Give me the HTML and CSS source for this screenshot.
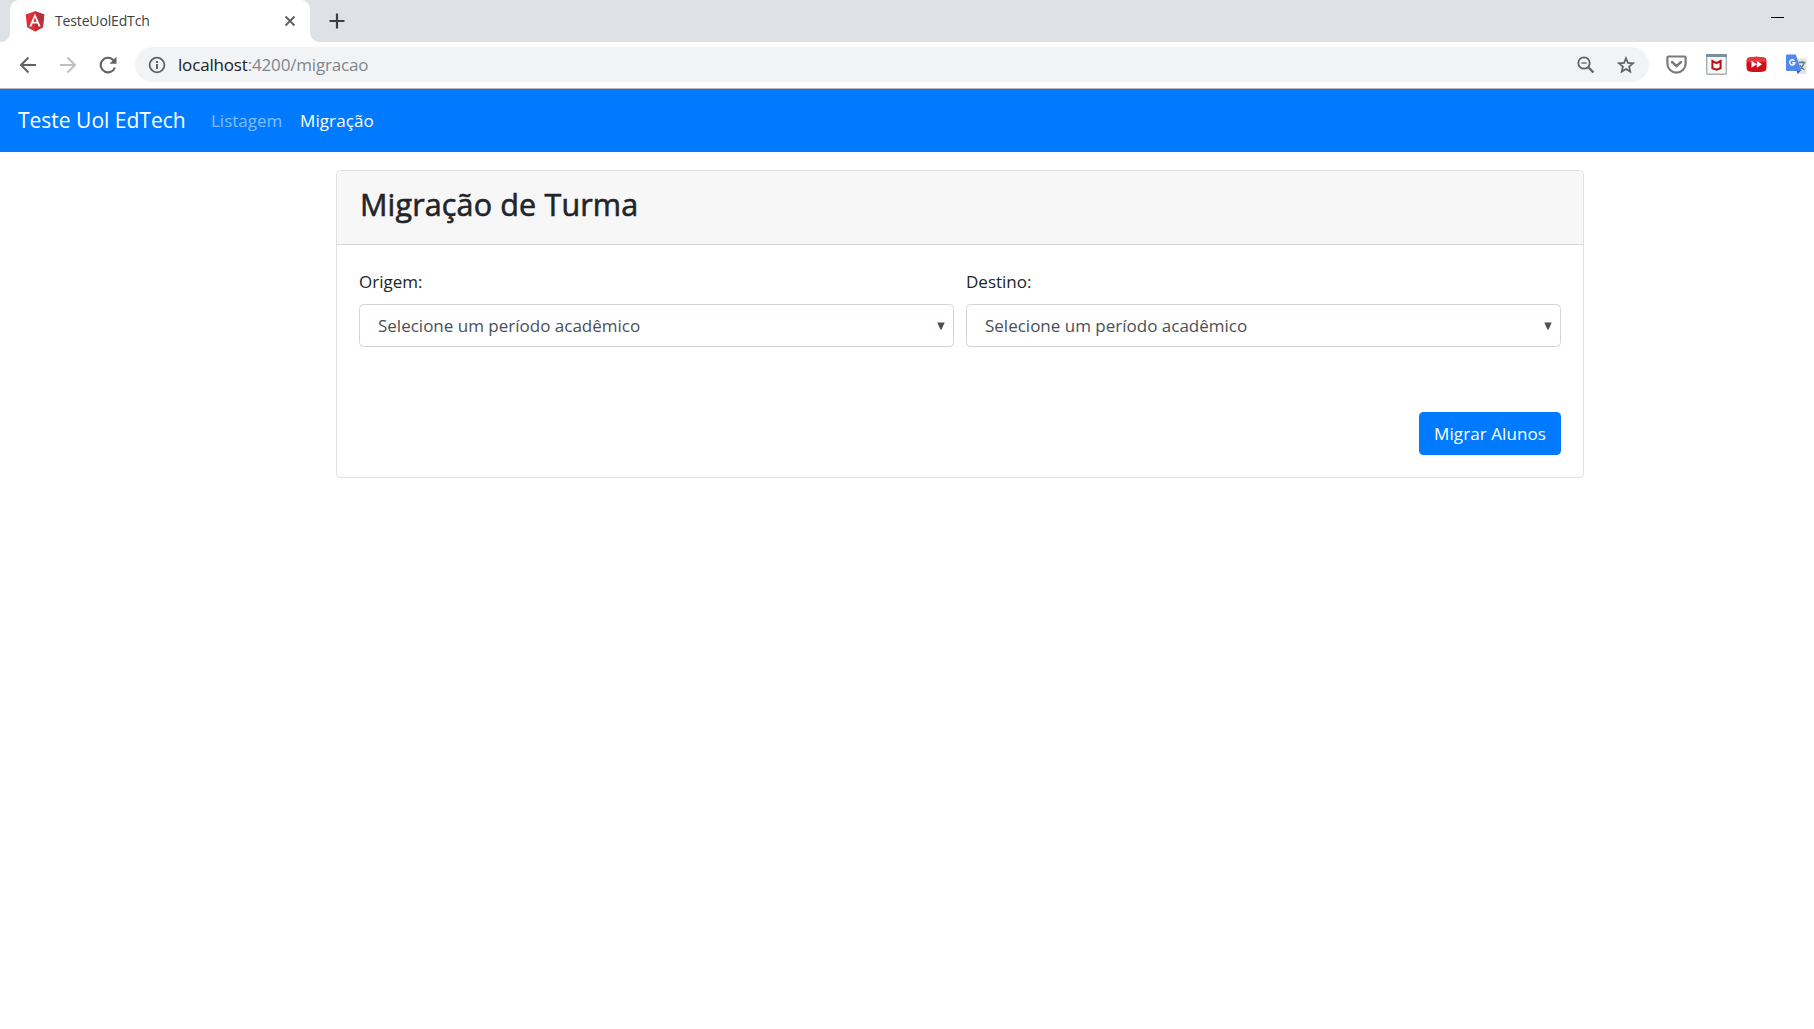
FILE: index.html
```html
<!DOCTYPE html>
<html lang="pt-BR">
<head>
<meta charset="utf-8">
<title>TesteUolEdTch</title>
<link rel="stylesheet" href="styles.css">
</head>
<body>
<div class="tabstrip">
  <div class="prev-tab"></div>
  <div class="tab">
    <svg class="tab-logo" width="20" height="21" viewBox="0 0 20 21"><path fill="#dd3139" d="M10 .3 19.3 3.500 17.900 16.200 10 20.600 2.100 16.200.7 3.500z"/><path fill="#b92f35" d="M10 .3 19.300 3.500 17.900 16.200 10 20.600z"/><path fill="#fff" fill-rule="evenodd" d="M10 2.500 4.300 15.500h2.200l1.100-2.900h4.800l1.100 2.900h2.200zm0 4.100 1.700 4.200H8.300z"/></svg>
    <span class="tab-title">TesteUolEdTch</span>
    <svg class="tab-close" width="12" height="12" viewBox="0 0 12 12"><path d="m1.500 1.500 9 9m0-9-9 9" stroke="#5f6368" stroke-width="2"/></svg>
  </div>
  <svg class="tab-plus" width="16" height="16" viewBox="0 0 16 16"><path d="M8 .5v15M.5 8h15" stroke="#3c4043" stroke-width="2.200"/></svg>
  <div class="minimize"></div>
</div>
<div class="toolbar">
  <div class="nav-icons">
    <svg width="18" height="18" viewBox="0 0 18 18"><path d="M17 9H2m7.500-7.500L2 9l7.500 7.500" fill="none" stroke="#5f6368" stroke-width="2"/></svg>
    <svg width="18" height="18" viewBox="0 0 18 18"><path d="M1 9h15M8.500 1.500 16 9l-7.500 7.500" fill="none" stroke="#bdbfc1" stroke-width="2"/></svg>
    <svg width="18" height="18" viewBox="0 0 18 18"><path d="M15.900 11.500A7.300 7.300 0 1 1 14 3.700l1.500 1.500" fill="none" stroke="#5f6368" stroke-width="2.100"/><path fill="#5f6368" d="M17.500.8v7h-7z"/></svg>
  </div>
  <div class="omnibox">
    <svg class="info" width="18" height="18" viewBox="0 0 18 18"><circle cx="9" cy="9" r="7.400" fill="none" stroke="#5f6368" stroke-width="1.800"/><path fill="#5f6368" d="M8 8h2v5H8zM8 5h2v2H8z"/></svg>
    <span class="url"><span class="host">localhost</span>:4200/migracao</span>
    <svg class="lens" width="18" height="18" viewBox="0 0 18 18"><circle cx="7" cy="7" r="5.700" fill="none" stroke="#5f6368" stroke-width="1.800"/><path d="M11.500 11.500 16.500 16.500" stroke="#5f6368" stroke-width="2.300"/><path d="M4.300 7h5.400" stroke="#5f6368" stroke-width="1.300"/></svg>
    <svg class="star" width="18" height="18" viewBox="0 0 18 18"><path d="m9 2.200 1.900 4.700 5.100.4-3.900 3.300 1.200 5L9 13l-4.300 2.600 1.200-5L2 7.300l5.100-.4z" fill="none" stroke="#5f6368" stroke-width="1.700"/></svg>
  </div>
  <div class="extensions">
    <svg width="21" height="19" viewBox="0 0 21 19"><path d="M2.300 1.500h16.400q.9 0 .9.900V8.500a9.100 9.100 0 0 1-18.200 0V2.400q0-.9.900-.9z" fill="none" stroke="#7b7b7b" stroke-width="2.200"/><path d="m6 7 4.500 4.100L15 7" fill="none" stroke="#7b7b7b" stroke-width="2.500" stroke-linecap="round" stroke-linejoin="round"/></svg>
    <svg width="21" height="21" viewBox="0 0 21 21"><rect x=".7" y=".7" width="19.600" height="19.600" rx="1" fill="#f7f8f8" stroke="#a9b0b4" stroke-width="1.400"/><path fill="#78909c" d="M0 1q0-1 1-1h19q1 0 1 1v2H0z"/><path d="M6.400 7v7.200l4.100 1.600 4.100-1.600V7l-4.100 2.200z" fill="none" stroke="#b5121b" stroke-width="2"/></svg>
    <svg width="21" height="17" viewBox="0 0 21 17"><path fill="#cf101b" d="M3 1.500Q10.500.2 18 1.500q2 .4 2.300 2.500.5 4.500 0 9-.3 2-2.300 2.400-7.500 1.200-15 0Q1 15 .7 13q-.5-4.500 0-9Q1 1.900 3 1.500z"/><path fill="#e5383f" d="M3 1.500Q10.500.2 18 1.500q2 .4 2.300 2.500l.1 2H.6L.7 4Q1 1.900 3 1.500z"/><path fill="#fff" d="m5.500 4.800 5.300 3.500-5.300 3.500zM10.800 4.800l5.300 3.500-5.300 3.500z"/></svg>
    <svg width="21" height="21" viewBox="0 0 21 21"><path fill="#e3e3e3" d="M8 4.500h11.500q1 0 1 1V19q0 1-1 1H12z"/><path d="M12.500 8.500h7M16 7v1.500M18 8.500q-1 5-5 7.500m.8-5q1.500 3 4.700 5" fill="none" stroke="#607d8b" stroke-width="1.300"/><path fill="#3c4bc8" d="M10.500 16h5L11.500 20z"/><path fill="#4f89ee" d="M1 .5h8.800L15.300 17H1Q0 17 0 16V1.500q0-1 1-1z"/><path d="M8.300 6.700a2.600 2.600 0 1 0 .6 2H6.300" fill="none" stroke="#fff" stroke-width="1.400"/></svg>
  </div>
</div>
<nav class="navbar">
  <a class="brand">Teste Uol EdTech</a>
  <a class="link">Listagem</a>
  <a class="link active">Migração</a>
</nav>
<main class="card">
  <header class="card-header"><h3>Migração de Turma</h3></header>
  <div class="card-body">
    <div class="form-row">
      <div class="field">
        <label>Origem:</label>
        <div class="select"><span>Selecione um período acadêmico</span><svg width="8" height="8" viewBox="0 0 8 8"><path fill="#495057" d="M.3.500h7.400L4.600 7.500H3.400z"/></svg></div>
      </div>
      <div class="field">
        <label>Destino:</label>
        <div class="select"><span>Selecione um período acadêmico</span><svg width="8" height="8" viewBox="0 0 8 8"><path fill="#495057" d="M.3.500h7.400L4.600 7.500H3.400z"/></svg></div>
      </div>
    </div>
    <div class="actions"><button class="btn">Migrar Alunos</button></div>
  </div>
</main>
</body>
</html>
```
FILE: styles.css
```css
* { box-sizing: border-box; }
body { margin: 0; background: #fff; color: #212529; font: 17px/27px "Open Sans", "Noto Sans", sans-serif; }
svg { display: block; flex: none; }
.tabstrip { display: flex; height: 42px; align-items: center; background: linear-gradient(#fff, #fff) 0 0 / 20px 42px no-repeat, #dee1e6; }
.prev-tab { width: 10px; height: 42px; background: #dee1e6; border-bottom-right-radius: 9px; }
.tab { display: flex; align-items: center; width: 300px; height: 42px; padding: 0 15px; background: #fff; border-radius: 9px 9px 0 0; position: relative; }
.tab::after { content: ""; position: absolute; left: 300px; bottom: 0; width: 9px; height: 9px; background: radial-gradient(circle at 100% 0, transparent 8.5px, #fff 9px); }
.tab::before { content: ""; position: absolute; left: 0; top: 0; width: 9px; height: 9px; background: radial-gradient(circle at 100% 100%, transparent 8.5px, #dee1e6 9px); }
.tab-title { flex: 1; margin: -1px 0 0 10px; font-size: 14px; letter-spacing: -.15px; color: #3c4043; white-space: nowrap; }
.tab-close { margin-right: -1px; }
.tab-plus { margin-left: 19px; }
.minimize { margin: 0 30px 8px auto; width: 13px; height: 1px; background: #000; }
.toolbar { display: flex; align-items: center; height: 47px; border-bottom: 1px solid #b6b4b6; padding: 0 0 1px 19px; }
.nav-icons { display: flex; gap: 22px; width: 116px; }
.omnibox { display: flex; align-items: center; width: 1514px; height: 35px; border-radius: 18px; background: #f1f3f4; padding: 0 14px 0 13px; }
.url { flex: 1; margin: -1px 0 0 12px; color: #80868b; letter-spacing: -.17px; }
.host { color: #202124; }
.star { margin-left: 22px; }
.extensions { display: flex; align-items: center; gap: 19px; margin-left: 17px; }
.navbar { display: flex; align-items: center; height: 63px; padding-left: 18px; background: #007bff; }
.brand { width: 193px; font-size: 21px; color: #fff; white-space: nowrap; }
.link { width: 89px; color: rgba(255,255,255,.5); white-space: nowrap; }
.active { color: #fff; letter-spacing: .1px; }
.card { width: 1248px; height: 308px; margin: 18px 0 0 336px; border: 1px solid #dfdfdf; border-radius: 4.5px; }
.card-header { height: 74px; padding: 14px 23px 0; background: #f7f7f7; border-bottom: 1px solid #d7d7d7; border-radius: 4px 4px 0 0; }
h3 { margin: 0; font-size: 30.5px; line-height: 38px; font-weight: 500; letter-spacing: .15px; -webkit-text-stroke: .6px #212529; white-space: nowrap; }
.card-body { padding: 23px 22px; }
.form-row { display: flex; gap: 12px; }
.field { width: 595px; }
label { display: block; height: 36px; }
.select { display: flex; align-items: center; justify-content: space-between; height: 43px; padding: 0 8px 0 18px; border: 1px solid #ced4da; border-radius: 4.5px; color: #495057; }
.actions { display: flex; justify-content: flex-end; margin-top: 65px; }
.btn { width: 142px; height: 43px; padding: 0; border: 0; border-radius: 4.5px; background: #007bff; color: #fff; font: inherit; letter-spacing: .08px; white-space: nowrap; }
```
